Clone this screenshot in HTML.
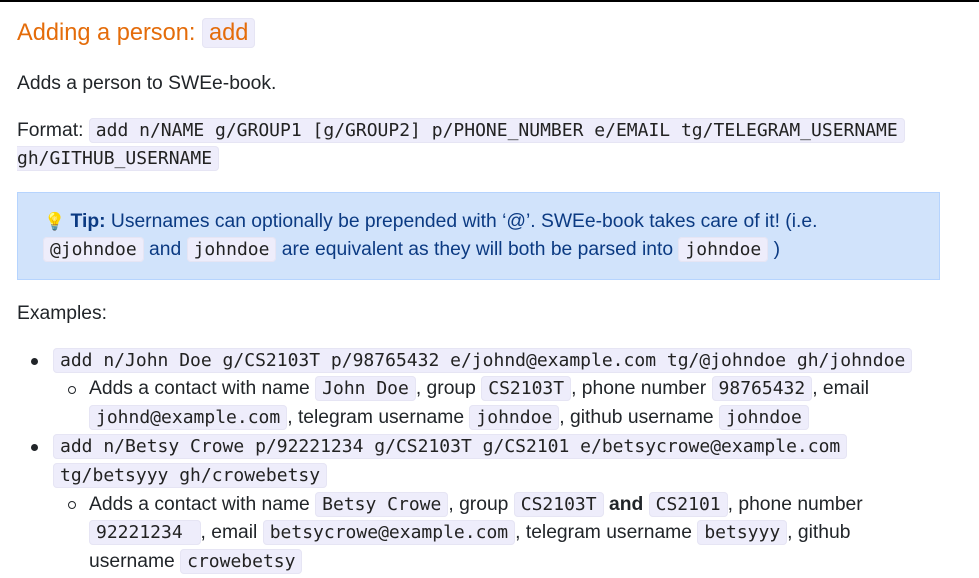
<!DOCTYPE html>
<html><head><meta charset="utf-8"><style>
*{margin:0;padding:0;box-sizing:border-box}
body{width:979px;height:578px;background:#fff;position:relative;overflow:hidden;font-family:"Liberation Sans",sans-serif;font-size:19.3px;color:#212529;border-top:2px solid #000}
.l{position:absolute;white-space:nowrap;line-height:28px;height:28px}
code{font-family:"DejaVu Sans Mono","Liberation Mono",monospace;font-size:18px;background:#eeedfb;border:1px solid #e6e5f4;border-radius:4px;padding:1px 6px;color:#222}
h2{position:absolute;left:17px;top:14px;font-weight:normal;font-size:23.6px;color:#e46c0a;line-height:34px;white-space:nowrap}
h2 code{font-family:"Liberation Sans",sans-serif;font-size:23.6px;color:#e46c0a;padding:1px 6px}
.tip{position:absolute;left:17px;top:190px;width:923px;height:88px;background:#d1e3fb;border:1px solid #b6d4fe}
.t{color:#0b3a82}
.t code{color:#222}
.dot{position:absolute;width:7px;height:7px;border-radius:50%;background:#212529}
.circ{position:absolute;width:8px;height:8px;border-radius:50%;border:1.3px solid #212529}
</style></head><body>
<h2>Adding a person: <code>add</code></h2>
<div class="l" style="left:17px;top:68px">Adds a person to SWEe-book.</div>
<div class="l" style="left:17px;top:115px">Format: <code>add n/NAME g/GROUP1 [g/GROUP2] p/PHONE_NUMBER e/EMAIL tg/TELEGRAM_USERNAME</code></div>
<div class="l" style="left:17px;top:143px"><code style="padding-left:0;border-left:0;border-radius:0 4px 4px 0">gh/GITHUB_USERNAME</code></div>
<div class="tip"></div>
<div class="l t" style="left:44px;top:206px"><span style="font-size:17px">💡</span> <b>Tip:</b> Usernames can optionally be prepended with ‘@’. SWEe-book takes care of it! (i.e.</div>
<div class="l t" style="left:43px;top:234px"><code>@johndoe</code> and <code>johndoe</code> are equivalent as they will both be parsed into <code>johndoe</code> )</div>
<div class="l" style="left:17px;top:298px">Examples:</div>
<div class="dot" style="left:31px;top:356px"></div>
<div class="l" style="left:53px;top:345px"><code>add n/John Doe g/CS2103T p/98765432 e/johnd@example.com tg/@johndoe gh/johndoe</code></div>
<div class="circ" style="left:68px;top:384px"></div>
<div class="l" style="left:89px;top:373px">Adds a contact with name <code>John Doe</code>, group <code>CS2103T</code>, phone number <code>98765432</code>, email</div>
<div class="l" style="left:89px;top:402px"><code>johnd@example.com</code>, telegram username <code>johndoe</code>, github username <code>johndoe</code></div>
<div class="dot" style="left:31px;top:442px"></div>
<div class="l" style="left:53px;top:431px"><code>add n/Betsy Crowe p/92221234 g/CS2103T g/CS2101 e/betsycrowe@example.com</code></div>
<div class="l" style="left:53px;top:460px"><code>tg/betsyyy gh/crowebetsy</code></div>
<div class="circ" style="left:68px;top:499px"></div>
<div class="l" style="left:89px;top:489px">Adds a contact with name <code>Betsy Crowe</code>, group <code>CS2103T</code> <b>and</b> <code>CS2101</code>, phone number</div>
<div class="l" style="left:89px;top:517px"><code>92221234 </code>, email <code>betsycrowe@example.com</code>, telegram username <code>betsyyy</code>, github</div>
<div class="l" style="left:89px;top:546px">username <code>crowebetsy</code></div>
</body></html>
